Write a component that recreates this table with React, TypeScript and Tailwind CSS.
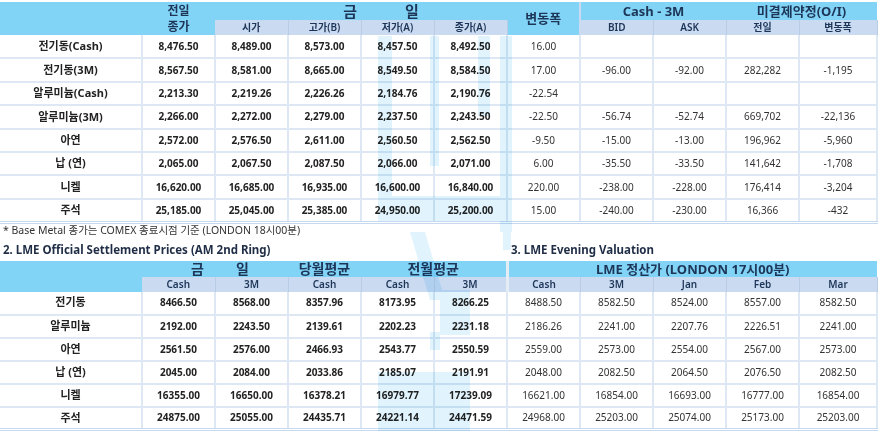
const top = [
  ["전기동(Cash)", "8,476.50", "8,489.00", "8,573.00", "8,457.50", "8,492.50", "16.00", "", "", "", ""],
  ["전기동(3M)", "8,567.50", "8,581.00", "8,665.00", "8,549.50", "8,584.50", "17.00", "-96.00", "-92.00", "282,282", "-1,195"],
  ["알루미늄(Cash)", "2,213.30", "2,219.26", "2,226.26", "2,184.76", "2,190.76", "-22.54", "", "", "", ""],
  ["알루미늄(3M)", "2,266.00", "2,272.00", "2,279.00", "2,237.50", "2,243.50", "-22.50", "-56.74", "-52.74", "669,702", "-22,136"],
  ["아연", "2,572.00", "2,576.50", "2,611.00", "2,560.50", "2,562.50", "-9.50", "-15.00", "-13.00", "196,962", "-5,960"],
  ["납 (연)", "2,065.00", "2,067.50", "2,087.50", "2,066.00", "2,071.00", "6.00", "-35.50", "-33.50", "141,642", "-1,708"],
  ["니켈", "16,620.00", "16,685.00", "16,935.00", "16,600.00", "16,840.00", "220.00", "-238.00", "-228.00", "176,414", "-3,204"],
  ["주석", "25,185.00", "25,045.00", "25,385.00", "24,950.00", "25,200.00", "15.00", "-240.00", "-230.00", "16,366", "-432"],
];

const bottom = [
  ["전기동", "8466.50", "8568.00", "8357.96", "8173.95", "8266.25", "8488.50", "8582.50", "8524.00", "8557.00", "8582.50"],
  ["알루미늄", "2192.00", "2243.50", "2139.61", "2202.23", "2231.18", "2186.26", "2241.00", "2207.76", "2226.51", "2241.00"],
  ["아연", "2561.50", "2576.00", "2466.93", "2543.77", "2550.59", "2559.00", "2573.00", "2554.00", "2567.00", "2573.00"],
  ["납 (연)", "2045.00", "2084.00", "2033.86", "2185.07", "2191.91", "2048.00", "2082.50", "2064.50", "2076.50", "2082.50"],
  ["니켈", "16355.00", "16650.00", "16378.21", "16979.77", "17239.09", "16621.00", "16854.00", "16693.00", "16777.00", "16854.00"],
  ["주석", "24875.00", "25055.00", "24435.71", "24221.14", "24471.59", "24968.00", "25203.00", "25074.00", "25173.00", "25203.00"],
];

const cyan = "bg-[#82d4f7] text-[#1d3557] font-bold";
const sub = "bg-[#c9daf1] text-[#1d3557] font-semibold text-[10px] border-r border-[#b9cce6]";
const cell = "border-b-2 border-r-2 border-[#dde8f4] text-center align-middle";

function Cols() {
  return (
    <colgroup>
      <col className="w-[142px]" />
      {Array.from({ length: 9 }).map((_, i) => (
        <col key={i} className="w-[73px]" />
      ))}
      <col />
    </colgroup>
  );
}

function Watermark() {
  return (
    <svg className="pointer-events-none absolute inset-0 mix-blend-multiply" width="878" height="431" viewBox="0 0 878 431">
      <g fill="#c4e8fa" opacity="0.5">
        <rect x="378" y="36" width="14" height="170" />
        <rect x="430" y="36" width="9" height="130" />
        <rect x="478" y="36" width="12" height="80" />
        <rect x="500" y="36" width="12" height="196" />
        <rect x="378" y="196" width="134" height="25" />
        <polygon points="410,232 425,232 445,300 430,300" />
        <rect x="503" y="232" width="8" height="18" />
        <rect x="440" y="290" width="30" height="45" />
        <rect x="430" y="332" width="10" height="18" />
        <rect x="378" y="372" width="92" height="59" />
      </g>
    </svg>
  );
}

export default function App() {
  return (
    <div className="relative w-[878px] h-[431px] overflow-hidden bg-white pt-[2px] font-[family-name:'Noto_Sans','Noto_Sans_CJK_KR',sans-serif] text-[#262626]">
      <table className="w-full table-fixed border-collapse">
        <Cols />
        <thead>
          <tr className="h-[18px]">
            <th rowSpan={2} className={cyan}></th>
            <th rowSpan={2} className={`${cyan} text-[12px] leading-[16px]`}>
              전일
              <br />
              종가
            </th>
            <th colSpan={4} className={`${cyan} pl-[40px] text-[15px] leading-[18px]`}>
              금<span className="ml-[48px]">일</span>
            </th>
            <th rowSpan={2} className={`${cyan} text-[13px] border-r-2 border-[#c9daf1]`}>변동폭</th>
            <th colSpan={2} className={`${cyan} text-[13px] leading-[18px]`}>Cash - 3M</th>
            <th colSpan={2} className={`${cyan} text-[13px] leading-[18px]`}>미결제약정(O/I)</th>
          </tr>
          <tr className="h-[15px]">
            {["시가", "고가(B)", "저가(A)", "종가(A)", "BID", "ASK", "전일", "변동폭"].map((h, i) => (
              <th key={i} className={`${sub} leading-[15px] ${i === 6 ? "border-l border-l-[#9fb4d2]" : ""}`}>
                {h}
              </th>
            ))}
          </tr>
        </thead>
        <tbody>
          {top.map((r, ri) => (
            <tr key={ri} className={`h-[23.4px] ${ri === top.length - 1 ? "border-b-[3px] border-double border-[#c7d9ee]" : ""}`}>
              {r.map((v, i) => (
                <td
                  key={i}
                  className={`${cell} ${
                    i === 0 ? "text-[11px] font-bold text-[#222]" : i <= 5 ? "text-[10px] font-bold text-[#222]" : "text-[10px] text-[#333]"
                  }`}
                >
                  {v}
                </td>
              ))}
            </tr>
          ))}
        </tbody>
      </table>

      <div className="flex h-[14px] items-center pl-[3px] text-[10.5px] leading-none text-[#333]">
        * Base Metal 종가는 COMEX 종료시점 기준 (LONDON 18시00분)
      </div>
      <div className="flex h-[23px] items-center pt-[2px] text-[11.5px] font-bold leading-none text-[#1f2d46]">
        <span className="w-[508px] pl-[3px]">2. LME Official Settlement Prices (AM 2nd Ring)</span>
        <span className="pl-[3px]">3. LME Evening Valuation</span>
      </div>

      <table className="w-full table-fixed border-collapse">
        <Cols />
        <thead>
          <tr className="h-[16px]">
            <th rowSpan={2} className={cyan}></th>
            <th colSpan={2} className={`${cyan} pl-[10px] text-[14px] leading-[16px]`}>
              금<span className="ml-[32px]">일</span>
            </th>
            <th className={`${cyan} text-[14px] leading-[16px]`}>당월평균</th>
            <th colSpan={2} className={`${cyan} text-[14px] leading-[16px]`}>전월평균</th>
            <th colSpan={5} className={`${cyan} text-[13px] leading-[16px] border-l-[3px] border-[#e4ecf4]`}>
              LME 정산가 (LONDON 17시00분)
            </th>
          </tr>
          <tr className="h-[15px]">
            {["Cash", "3M", "Cash", "Cash", "3M", "Cash", "3M", "Jan", "Feb", "Mar"].map((h, i) => (
              <th
                key={i}
                className={`${sub} leading-[15px] ${i === 5 ? "border-l-[3px] border-l-[#e4ecf4]" : ""} ${i === 2 ? "border-l border-l-[#9fb4d2]" : ""}`}
              >
                {h}
              </th>
            ))}
          </tr>
        </thead>
        <tbody>
          {bottom.map((r, ri) => (
            <tr key={ri} className={`h-[23px] ${ri === bottom.length - 1 ? "border-b-[3px] border-double border-[#c7d9ee]" : ""}`}>
              {r.map((v, i) => (
                <td
                  key={i}
                  className={`${cell} ${
                    i === 0 ? "text-[11px] font-bold text-[#222]" : i <= 5 ? "text-[10px] font-bold text-[#222]" : "text-[10px] text-[#333]"
                  }`}
                >
                  {v}
                </td>
              ))}
            </tr>
          ))}
        </tbody>
      </table>

      <Watermark />
    </div>
  );
}
